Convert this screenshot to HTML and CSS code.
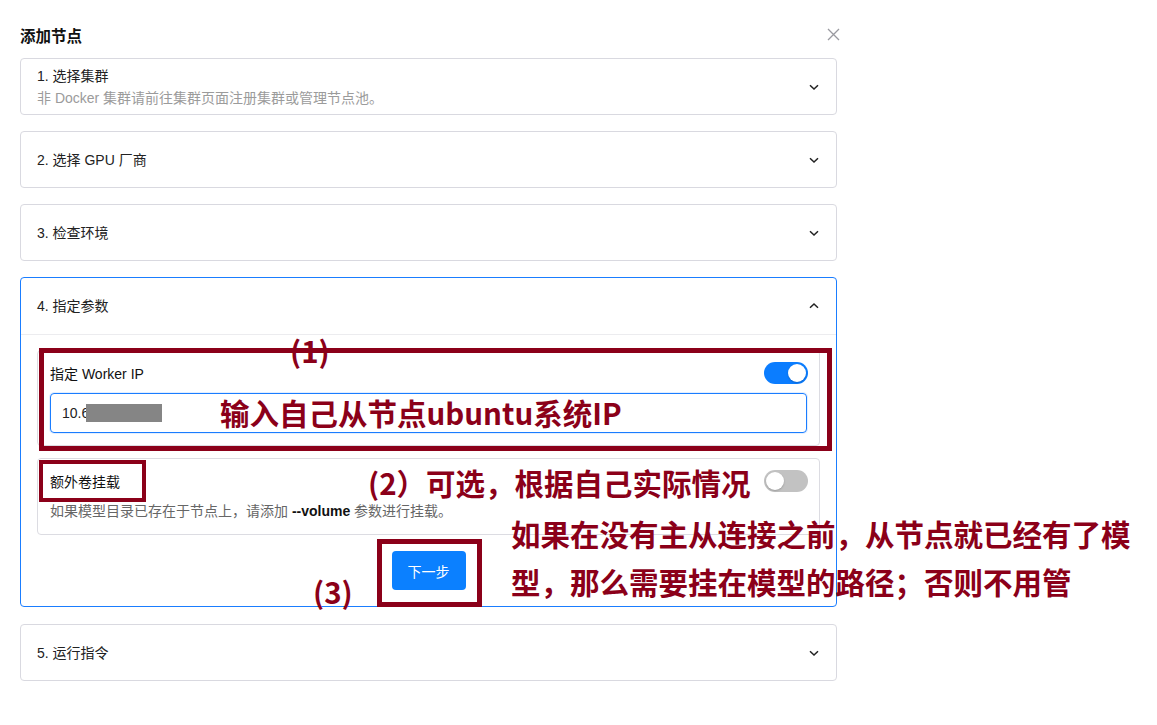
FILE: index.html
```html
<!DOCTYPE html>
<html lang="zh-CN">
<head>
<meta charset="utf-8">
<title>添加节点</title>
<link rel="stylesheet" href="styles.css">
</head>
<body>
<div class="page">
  <div class="modal">
    <div class="modal-head">
      <h2 class="modal-title">添加节点</h2>
      <span class="close" aria-label="关闭">
        <svg width="13" height="13" viewBox="0 0 13 13"><path d="M1 1 L12 12 M12 1 L1 12" stroke="#9a9aa0" stroke-width="1.3" fill="none"/></svg>
      </span>
    </div>

    <div class="steps">
      <div class="step">
        <div class="step-text">
          <div class="step-title">1. 选择集群</div>
          <div class="step-desc">非 Docker 集群请前往集群页面注册集群或管理节点池。</div>
        </div>
        <svg class="chev" width="12" height="12" viewBox="0 0 12 12"><path d="M2 4.2 L6 8 L10 4.2" stroke="#222" stroke-width="1.5" fill="none"/></svg>
      </div>

      <div class="step">
        <div class="step-title">2. 选择 GPU 厂商</div>
        <svg class="chev" width="12" height="12" viewBox="0 0 12 12"><path d="M2 4.2 L6 8 L10 4.2" stroke="#222" stroke-width="1.5" fill="none"/></svg>
      </div>

      <div class="step">
        <div class="step-title">3. 检查环境</div>
        <svg class="chev" width="12" height="12" viewBox="0 0 12 12"><path d="M2 4.2 L6 8 L10 4.2" stroke="#222" stroke-width="1.5" fill="none"/></svg>
      </div>

      <div class="step-open">
        <div class="step-head">
          <div class="step-title">4. 指定参数</div>
          <svg class="chev" width="12" height="12" viewBox="0 0 12 12"><path d="M2 7.8 L6 4 L10 7.8" stroke="#222" stroke-width="1.5" fill="none"/></svg>
        </div>
        <div class="step-body">
          <div class="panel">
            <div class="panel-row">
              <span class="panel-label">指定 Worker IP</span>
              <span class="toggle toggle-on"><span class="knob"></span></span>
            </div>
            <div class="input">10.6<span class="redact"></span></div>
          </div>
          <div class="panel">
            <div class="panel-row">
              <span class="panel-label">额外卷挂载</span>
              <span class="toggle toggle-off"><span class="knob"></span></span>
            </div>
            <div class="panel-desc">如果模型目录已存在于节点上，请添加 <b>--volume</b> 参数进行挂载。</div>
          </div>
          <div class="actions">
            <button class="btn-primary">下一步</button>
          </div>
        </div>
      </div>

      <div class="step">
        <div class="step-title">5. 运行指令</div>
        <svg class="chev" width="12" height="12" viewBox="0 0 12 12"><path d="M2 4.2 L6 8 L10 4.2" stroke="#222" stroke-width="1.5" fill="none"/></svg>
      </div>
    </div>
  </div>

  <div class="mark mark-1"></div>
  <div class="mark mark-2"></div>
  <div class="mark mark-3"></div>
  <div class="note note-n1">(1)</div>
  <div class="note note-ip">输入自己从节点ubuntu系统IP</div>
  <div class="note note-n2">(2）可选，根据自己实际情况</div>
  <div class="note note-n3">(3)</div>
  <div class="note note-long">如果在没有主从连接之前，从节点就已经有了模<br>型，那么需要挂在模型的路径；否则不用管</div>
</div>
</body>
</html>
```

FILE: styles.css
```css
* { box-sizing: border-box; }

html, body {
  margin: 0;
  padding: 0;
  background: #ffffff;
}

body {
  font-family: "Liberation Sans", "Noto Sans CJK SC", sans-serif;
  font-size: 14px;
  color: #222;
}

.page {
  position: relative;
  width: 1157px;
  height: 725px;
  overflow: hidden;
}

.modal {
  padding: 28px 0 0 20px;
  width: 840px;
}

.modal-head {
  width: 820px;
  display: flex;
  justify-content: space-between;
  align-items: flex-start;
  margin-bottom: 12px;
}

.modal-title {
  margin: 0;
  font-size: 15.5px;
  line-height: 18px;
  font-weight: 700;
  color: #111;
}

.close {
  display: block;
  width: 13px;
  height: 13px;
}
.close svg { display: block; }

.steps {
  width: 817px;
  display: flex;
  flex-direction: column;
  gap: 16px;
}

.step {
  height: 57px;
  border: 1px solid #d9d9e0;
  border-radius: 4px;
  display: flex;
  align-items: center;
  justify-content: space-between;
  padding: 0 16px 0 16px;
}

.step-title {
  font-size: 14px;
  line-height: 22px;
  color: #222;
}

.step-desc {
  font-size: 14px;
  line-height: 22px;
  color: #9b9b9b;
}

.chev { display: block; flex: none; }

.step-open {
  border: 1px solid #1a7dff;
  border-radius: 4px;
  margin-bottom: 1px;
}

.step-head {
  height: 57px;
  border-bottom: 1px solid #ececef;
  display: flex;
  align-items: center;
  justify-content: space-between;
  padding: 0 16px;
}

.step-body {
  padding: 15px 16px 16px;
  display: flex;
  flex-direction: column;
  gap: 12px;
}

.panel {
  border: 1px solid #dcdce2;
  border-radius: 4px;
  padding: 11px 12px 12px;
}

.panel-row {
  height: 22px;
  display: flex;
  align-items: center;
  justify-content: space-between;
}

.panel-label {
  font-size: 14px;
  color: #111;
}

.panel-desc {
  margin-top: 8px;
  font-size: 14px;
  line-height: 22px;
  color: #666;
}
.panel-desc b { color: #111; }

.toggle {
  position: relative;
  display: block;
  width: 44px;
  height: 22px;
  border-radius: 11px;
  margin-right: -1px;
}
.toggle-on { background: #0b7dff; }
.toggle-off { background: #c2c2c2; }
.knob {
  position: absolute;
  top: 2px;
  width: 18px;
  height: 18px;
  border-radius: 50%;
  background: #fff;
  box-shadow: 0 1px 2px rgba(0,0,0,0.2);
}
.toggle-on .knob { right: 2px; }
.toggle-off .knob { left: 2px; }

.input {
  margin-top: 9px;
  height: 40px;
  border: 1px solid #1a7dff;
  border-radius: 4px;
  box-shadow: 0 0 0 1px rgba(26,125,255,0.12);
  padding-left: 11px;
  display: flex;
  align-items: center;
  font-size: 14px;
  color: #222;
}

.redact {
  display: inline-block;
  width: 76px;
  height: 18px;
  margin-left: -3px;
  background: #858585;
}

.actions {
  display: flex;
  justify-content: center;
  padding-top: 4px;
}

.btn-primary {
  width: 74px;
  height: 39px;
  border: none;
  border-radius: 4px;
  background: #0b80ff;
  color: #fff;
  font-family: "Liberation Sans", "Noto Sans CJK SC", sans-serif;
  font-size: 14px;
  padding: 0;
}

/* annotation overlay */
.mark {
  position: absolute;
  border: 5px solid #8b0019;
}
.mark-1 { left: 39px; top: 348px; width: 793px; height: 103px; }
.mark-2 { left: 39px; top: 460px; width: 107px; height: 42px; border-width: 4px; }
.mark-3 { left: 377px; top: 539px; width: 105px; height: 68px; }

.note {
  position: absolute;
  font-family: "Noto Sans CJK SC", sans-serif;
  font-weight: 700;
  font-size: 29.5px;
  line-height: 30px;
  color: #8b0019;
  white-space: nowrap;
}
.note-n1 { left: 290px; top: 335px; }
.note-ip { left: 220px; top: 397px; }
.note-n2 { left: 368px; top: 467px; }
.note-n3 { left: 313px; top: 576px; }
.note-long { left: 511px; top: 509px; line-height: 48px; }
```
